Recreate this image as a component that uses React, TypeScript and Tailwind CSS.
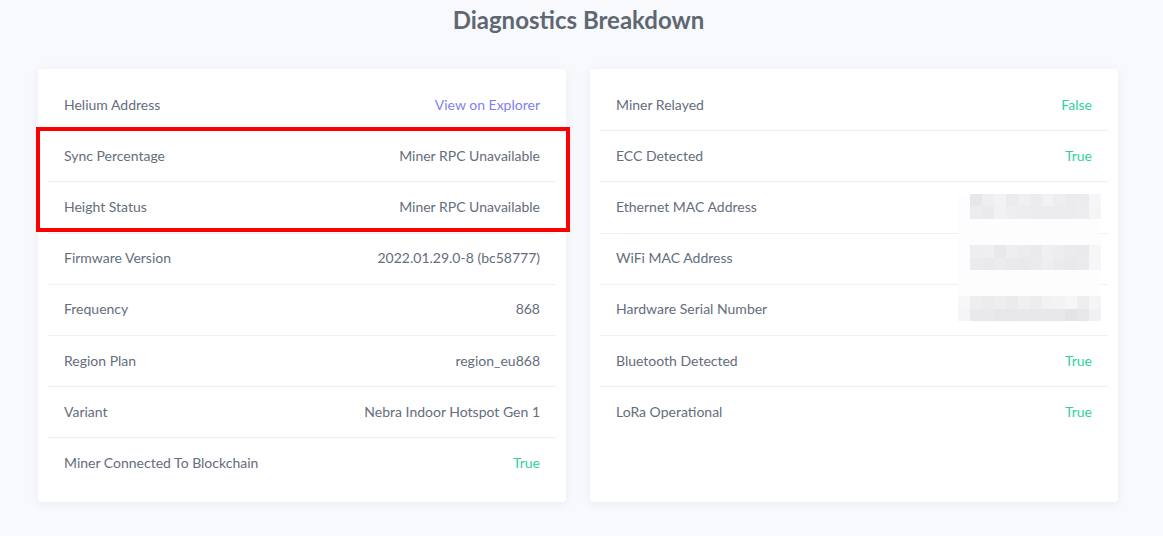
import React from 'react'

type Row = {
  label: string
  value?: string
  tone?: 'link' | 'ok' | 'plain'
  blur?: number[][]
  cover?: boolean
}

const left: Row[] = [
  { label: 'Helium Address', value: 'View on Explorer', tone: 'link' },
  { label: 'Sync Percentage', value: 'Miner RPC Unavailable' },
  { label: 'Height Status', value: 'Miner RPC Unavailable' },
  { label: 'Firmware Version', value: '2022.01.29.0-8 (bc58777)' },
  { label: 'Frequency', value: '868' },
  { label: 'Region Plan', value: 'region_eu868' },
  { label: 'Variant', value: 'Nebra Indoor Hotspot Gen 1' },
  { label: 'Miner Connected To Blockchain', value: 'True', tone: 'ok' },
]

// grey levels of the pixelated (redacted) values
const eth = [
  [253, 231, 238, 242, 235, 240, 236, 242, 238, 235, 236, 246],
  [253, 236, 234, 241, 238, 237, 236, 236, 236, 236, 237, 245],
]
const wifi = [
  [253, 238, 239, 233, 238, 236, 234, 239, 237, 235, 234, 246],
  [253, 235, 234, 236, 234, 233, 235, 238, 235, 233, 235, 246],
]
const serial = [
  [247, 238, 236, 238, 235, 240, 237, 242, 243, 246, 238, 245],
  [245, 233, 233, 231, 231, 232, 232, 232, 232, 228, 231, 241],
]

const right: Row[] = [
  { label: 'Miner Relayed', value: 'False', tone: 'ok' },
  { label: 'ECC Detected', value: 'True', tone: 'ok' },
  { label: 'Ethernet MAC Address', blur: eth, cover: true },
  { label: 'WiFi MAC Address', blur: wifi, cover: true },
  { label: 'Hardware Serial Number', blur: serial },
  { label: 'Bluetooth Detected', value: 'True', tone: 'ok' },
  { label: 'LoRa Operational', value: 'True', tone: 'ok' },
]

function Pixelated({ cells, cover }: { cells: number[][]; cover?: boolean }) {
  return (
    <div className="relative -mr-[9px] flex flex-col bg-white">
      {cells.map((line, i) => (
        <div key={i} className="flex">
          {line.map((g, j) => (
            <div
              key={j}
              className="h-[12.5px] w-[11.9px]"
              style={{ backgroundColor: `rgb(${g},${g},${g + 2})` }}
            />
          ))}
        </div>
      ))}
      {cover && <div className="absolute top-full left-0 z-10 h-[26px] w-full bg-[#fdfdfd]" />}
    </div>
  )
}

function Card({ rows, children }: { rows: Row[]; children?: React.ReactNode }) {
  return (
    <div className="relative w-[528px] rounded-[4px] bg-white px-[10px] pt-[11px] pb-[12px] shadow-[0_2px_10px_rgba(120,130,160,0.10)]">
      {rows.map((r, i) => (
        <div
          key={r.label}
          className={`flex h-[51.2px] items-center justify-between px-[16px] pb-[2px] ${
            i < rows.length - 1 ? 'border-b border-[#eef0f5]' : ''
          }`}
        >
          <span>{r.label}</span>
          {r.blur ? (
            <Pixelated cells={r.blur} cover={r.cover} />
          ) : (
            <span
              className={
                r.tone === 'link'
                  ? 'text-[#7f7ff2]'
                  : r.tone === 'ok'
                    ? 'text-[#2fd39a]'
                    : ''
              }
            >
              {r.value}
            </span>
          )}
        </div>
      ))}
      {children}
    </div>
  )
}

export default function App() {
  return (
    <div
      className="min-h-[536px] w-[1163px] bg-[#f8f9fd] text-[14px] text-[#656d7c]"
      style={{ fontFamily: 'Lato, "Open Sans", sans-serif' }}
    >
      <h2 className="pt-[5px] pr-[6px] text-center text-[24px] leading-[30px] font-bold text-[#5f6773]">
        Diagnostics Breakdown
      </h2>
      <div className="mt-[34px] flex gap-[24px] pl-[38px]">
        <Card rows={left}>
          <div className="pointer-events-none absolute top-[58px] left-[-2px] h-[105px] w-[534px] border-[4px] border-[#ff0000]" />
        </Card>
        <Card rows={right} />
      </div>
    </div>
  )
}
